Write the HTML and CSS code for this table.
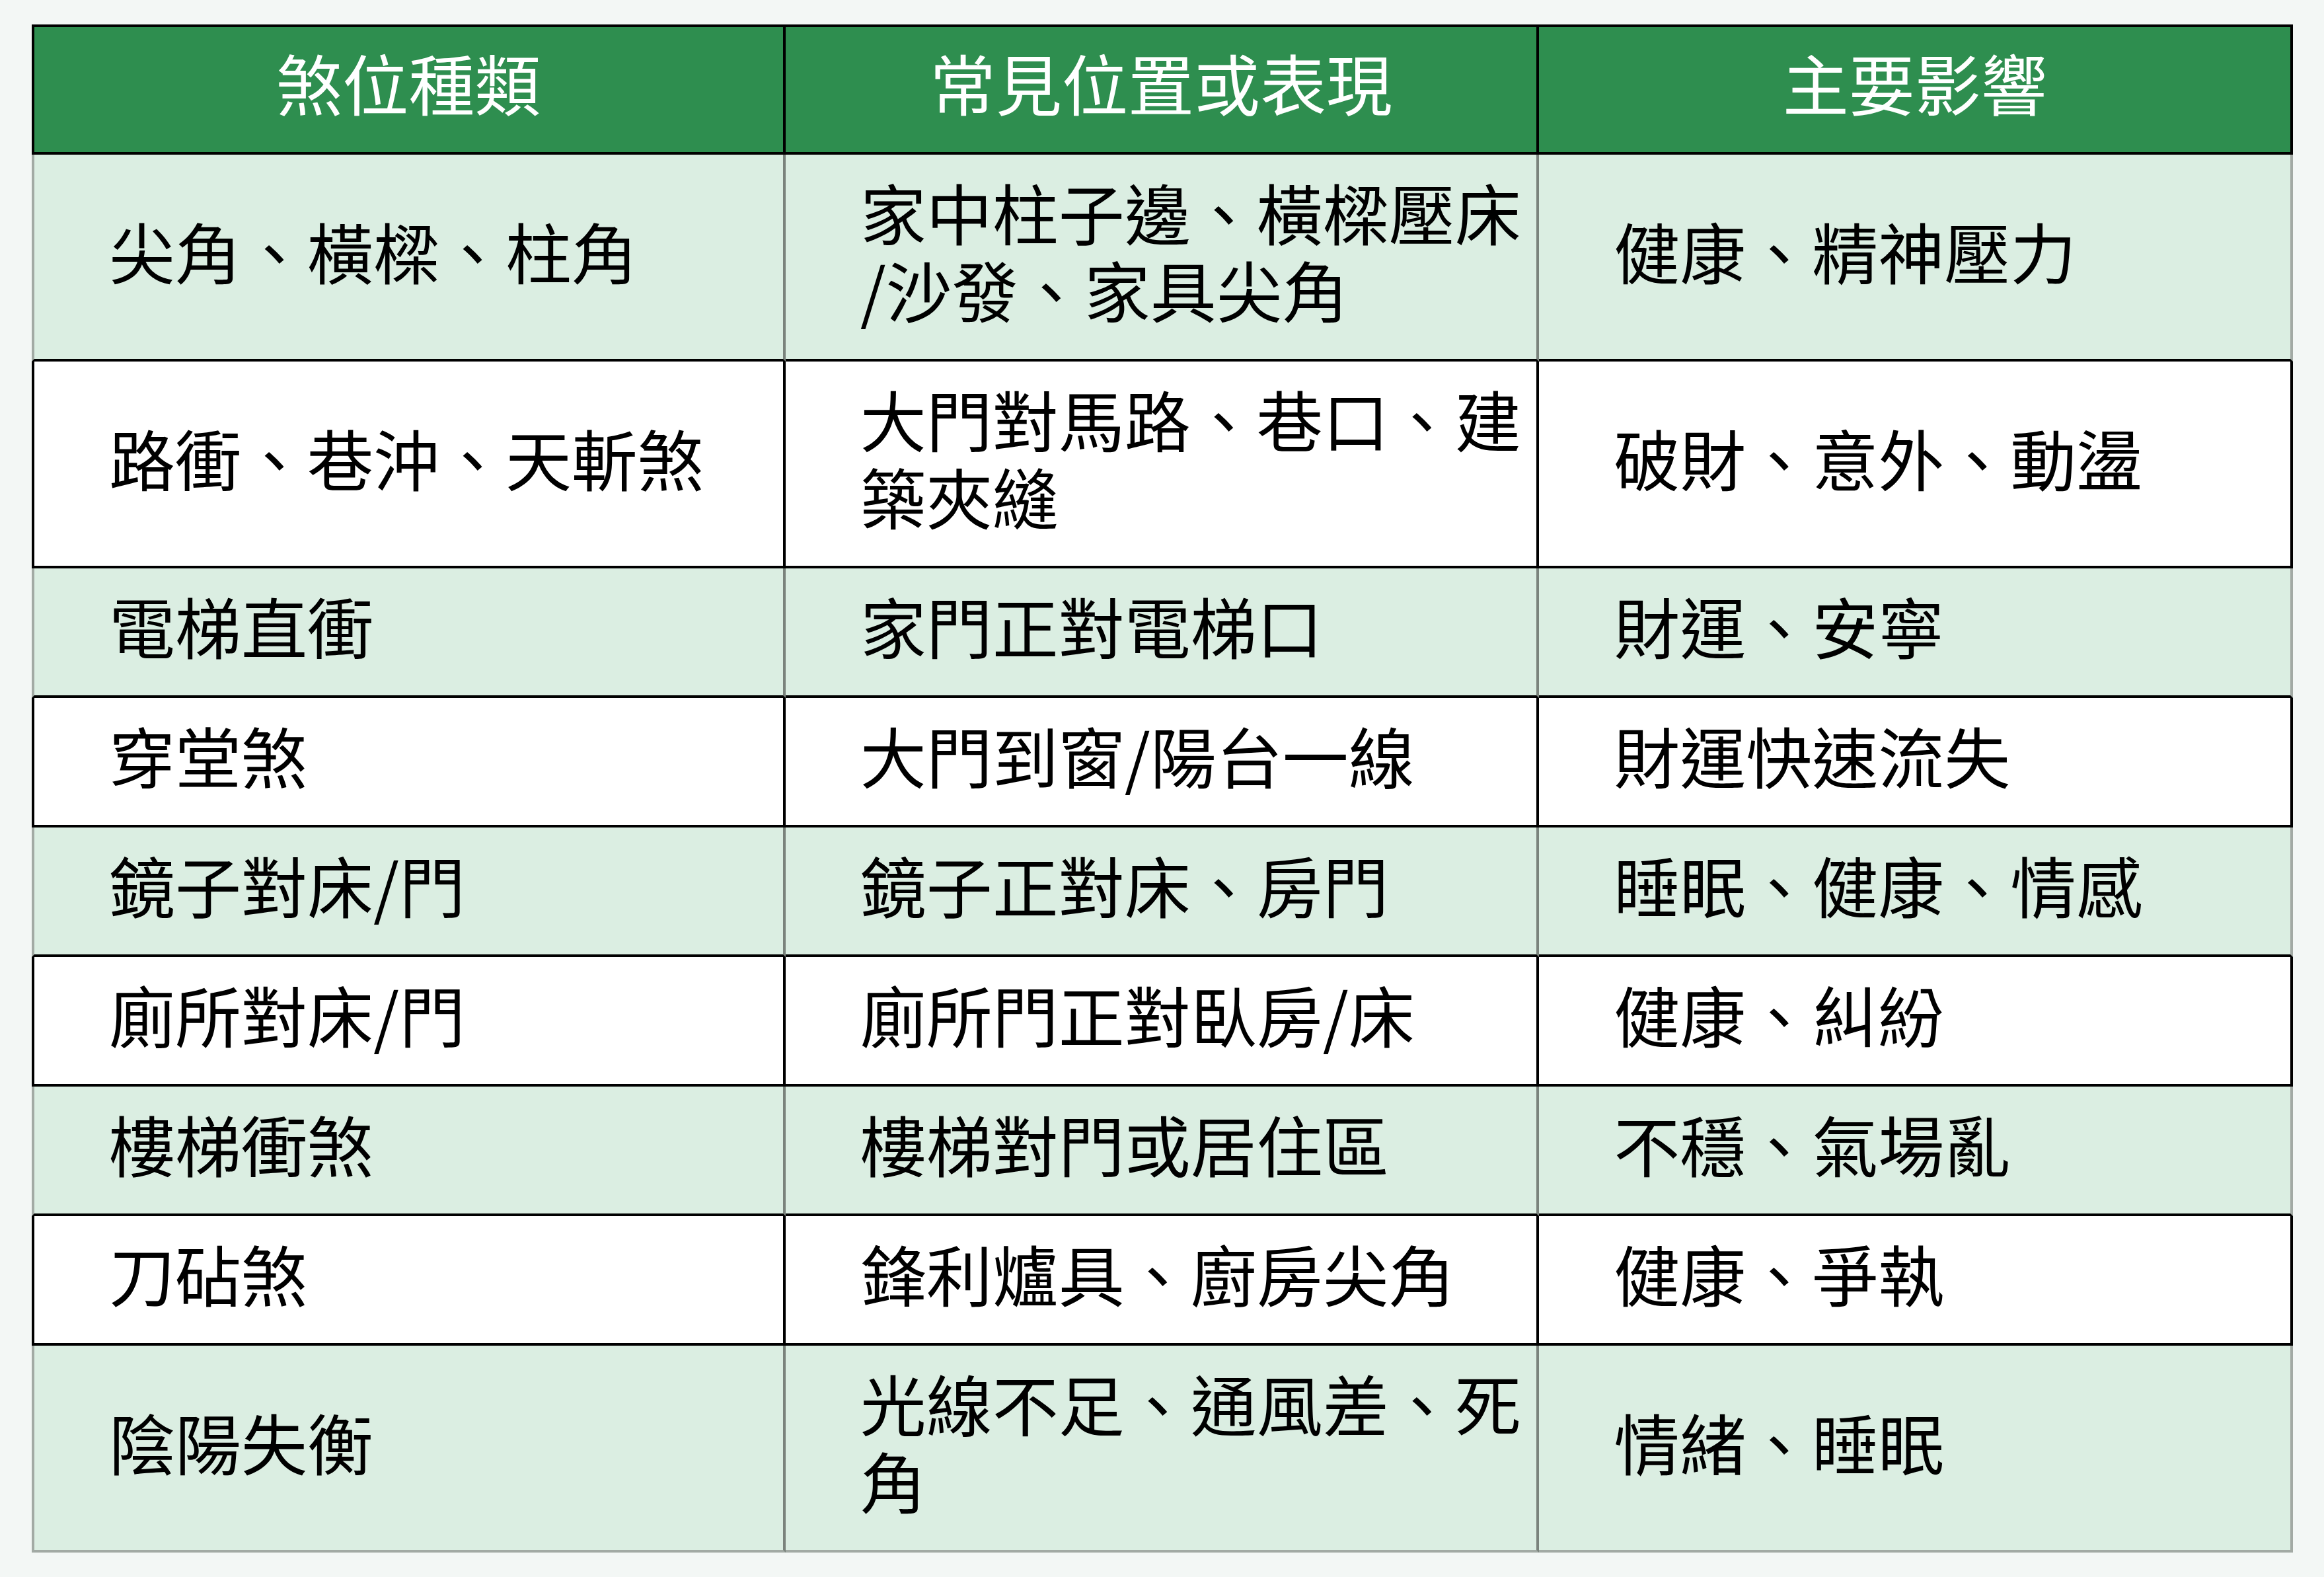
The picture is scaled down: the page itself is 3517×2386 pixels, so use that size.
FILE: index.html
```html
<!DOCTYPE html>
<html lang="zh-Hant">
<head>
<meta charset="utf-8">
<title>煞位種類</title>
<link rel="stylesheet" href="styles.css">
</head>
<body>
<div class="page">
<table class="sha-table">
<colgroup><col class="c"><col class="c"><col class="c"></colgroup>
<thead>
<tr><th>煞位種類</th><th>常見位置或表現</th><th>主要影響</th></tr>
</thead>
<tbody>
<tr class="g"><td>尖角、橫樑、柱角</td><td>家中柱子邊、橫樑壓床<br>/沙發、家具尖角</td><td>健康、精神壓力</td></tr>
<tr class="w"><td>路衝、巷沖、天斬煞</td><td>大門對馬路、巷口、建<br>築夾縫</td><td>破財、意外、動盪</td></tr>
<tr class="g"><td>電梯直衝</td><td>家門正對電梯口</td><td>財運、安寧</td></tr>
<tr class="w"><td>穿堂煞</td><td>大門到窗/陽台一線</td><td>財運快速流失</td></tr>
<tr class="g"><td>鏡子對床/門</td><td>鏡子正對床、房門</td><td>睡眠、健康、情感</td></tr>
<tr class="w"><td>廁所對床/門</td><td>廁所門正對臥房/床</td><td>健康、糾紛</td></tr>
<tr class="g"><td>樓梯衝煞</td><td>樓梯對門或居住區</td><td>不穩、氣場亂</td></tr>
<tr class="w"><td>刀砧煞</td><td>鋒利爐具、廚房尖角</td><td>健康、爭執</td></tr>
<tr class="g last"><td>陰陽失衡</td><td>光線不足、通風差、死<br>角</td><td>情緒、睡眠</td></tr>
</tbody>
</table>
</div>
</body>
</html>
```

FILE: styles.css
```css
html, body {
  margin: 0;
  padding: 0;
  background: #f3f7f5;
}

.page {
  padding: 37px 47px 40px 48px;
}

.sha-table {
  width: 3422px;
  table-layout: fixed;
  border-collapse: separate;
  border-spacing: 0;
  font-family: "Noto Sans CJK TC", "Noto Sans CJK SC", sans-serif;
  font-size: 100px;
  line-height: 117px;
  color: #000;
}

.sha-table .c {
  width: 33.333%;
}

.sha-table th {
  background: #2e8e4f;
  color: #fff;
  font-weight: 400;
  text-align: center;
  padding: 24px 10px 48px;
  border-top: 4px solid #000;
  border-bottom: 4px solid #000;
  border-right: 4px solid #000;
}

.sha-table th:first-child {
  border-left: 4px solid #000;
}

.sha-table td {
  text-align: left;
  vertical-align: middle;
  padding: 27px 8px 48px 113px;
  border-right: 4px solid #000;
  border-bottom: 4px solid #000;
}

.sha-table td:first-child {
  border-left: 4px solid #000;
}

.sha-table tr.w td {
  background: #ffffff;
}

.sha-table tr.g td {
  background: #dbeee2;
  border-right-color: #7a837c;
}

.sha-table tr.g td:first-child {
  border-left-color: #a2aaa4;
}

.sha-table tr.g td:last-child {
  border-right-color: #a2aaa4;
}

.sha-table tr.last td {
  border-bottom-color: #a2aaa4;
}
```
